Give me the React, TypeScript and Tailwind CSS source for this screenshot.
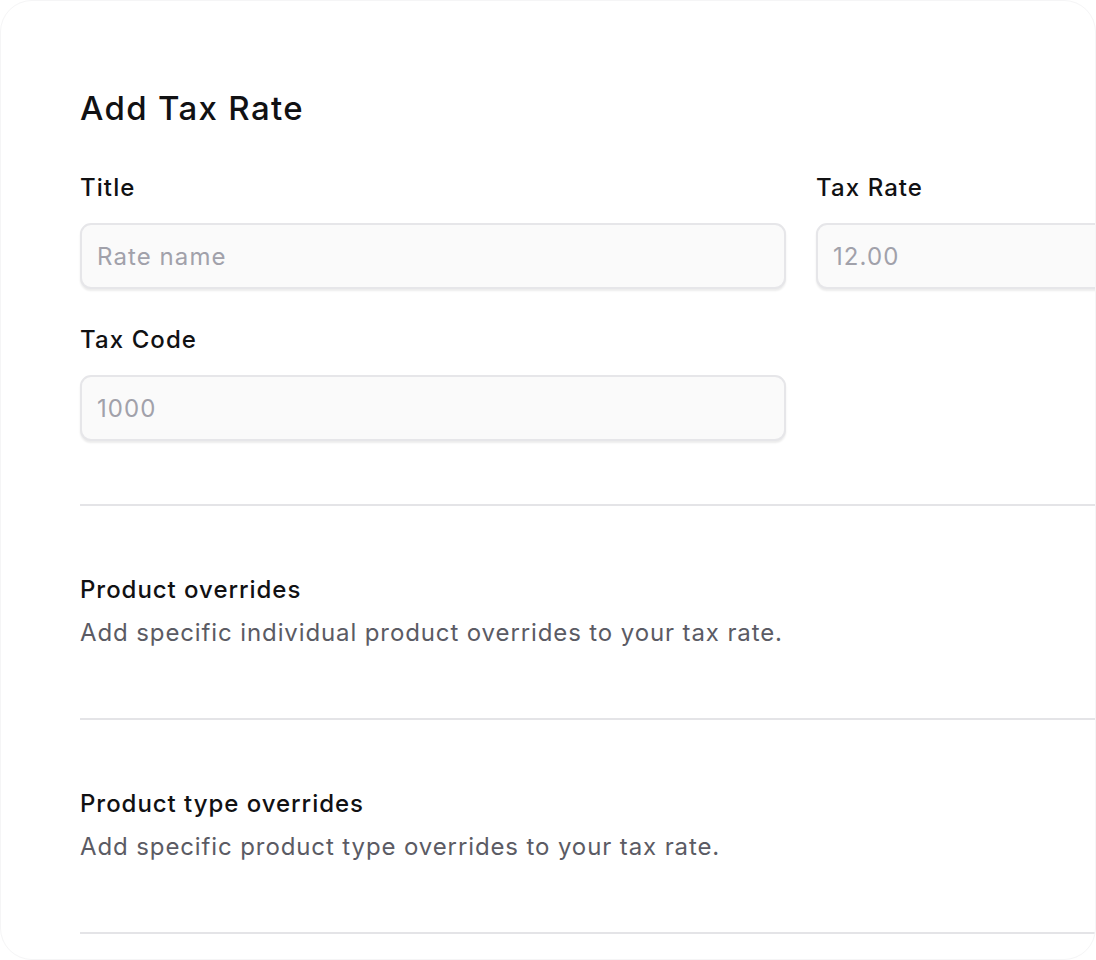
import React from "react";

type FieldProps = {
  label: string;
  placeholder: string;
};

const Field = ({ label, placeholder }: FieldProps) => {
  return (
    <div className="flex flex-col">
      <label className="mb-[19px] text-[24px] leading-8 font-medium tracking-[0.045em] text-[#111113]">
        {label}
      </label>
      <input
        type="text"
        placeholder={placeholder}
        className="h-[66px] w-full rounded-[11px] border-2 border-[#e6e6e9] bg-[#fafafa] px-[15px] text-[24px] tracking-[0.045em] text-[#111113] placeholder:text-[#a1a1aa] shadow-[0_2px_2px_rgba(0,0,0,0.08)] outline-none"
      />
    </div>
  );
};

type OverrideProps = {
  title: string;
  description: string;
};

const OverrideSection = ({ title, description }: OverrideProps) => {
  return (
    <div className="pt-[68px] pb-[69px]">
      <h2 className="text-[24px] leading-8 font-medium tracking-[0.04em] text-[#111113]">
        {title}
      </h2>
      <p className="mt-[11px] text-[24px] leading-8 tracking-[0.037em] text-[#5b5b64]">
        {description}
      </p>
    </div>
  );
};

const App = () => {
  return (
    <div
      className="w-[1096px] h-[960px] overflow-hidden bg-white"
      style={{ fontFamily: "Inter, 'Noto Sans', sans-serif" }}
    >
      <div className="h-full overflow-hidden rounded-[32px] border border-[#f5f5f6] pt-[87px] pl-[79px]">
        <h1 className="text-[33px] leading-10 font-medium tracking-[0.04em] text-[#111113]">
          Add Tax Rate
        </h1>

        <div className="mt-[44px] grid w-max grid-cols-[706px_706px] gap-x-[30px] gap-y-[35px]">
          <Field label="Title" placeholder="Rate name" />
          <Field label="Tax Rate" placeholder="12.00" />
          <Field label="Tax Code" placeholder="1000" />
        </div>

        {/* overrides list, wider than the card so dividers run to its edge */}
        <div className="mt-[63px] w-[1100px]">
          <div className="h-[2px] bg-[#e4e4e7]" />
          <OverrideSection
            title="Product overrides"
            description="Add specific individual product overrides to your tax rate."
          />
          <div className="h-[2px] bg-[#e4e4e7]" />
          <OverrideSection
            title="Product type overrides"
            description="Add specific product type overrides to your tax rate."
          />
          <div className="h-[2px] bg-[#e4e4e7]" />
        </div>
      </div>
    </div>
  );
};

export default App;
